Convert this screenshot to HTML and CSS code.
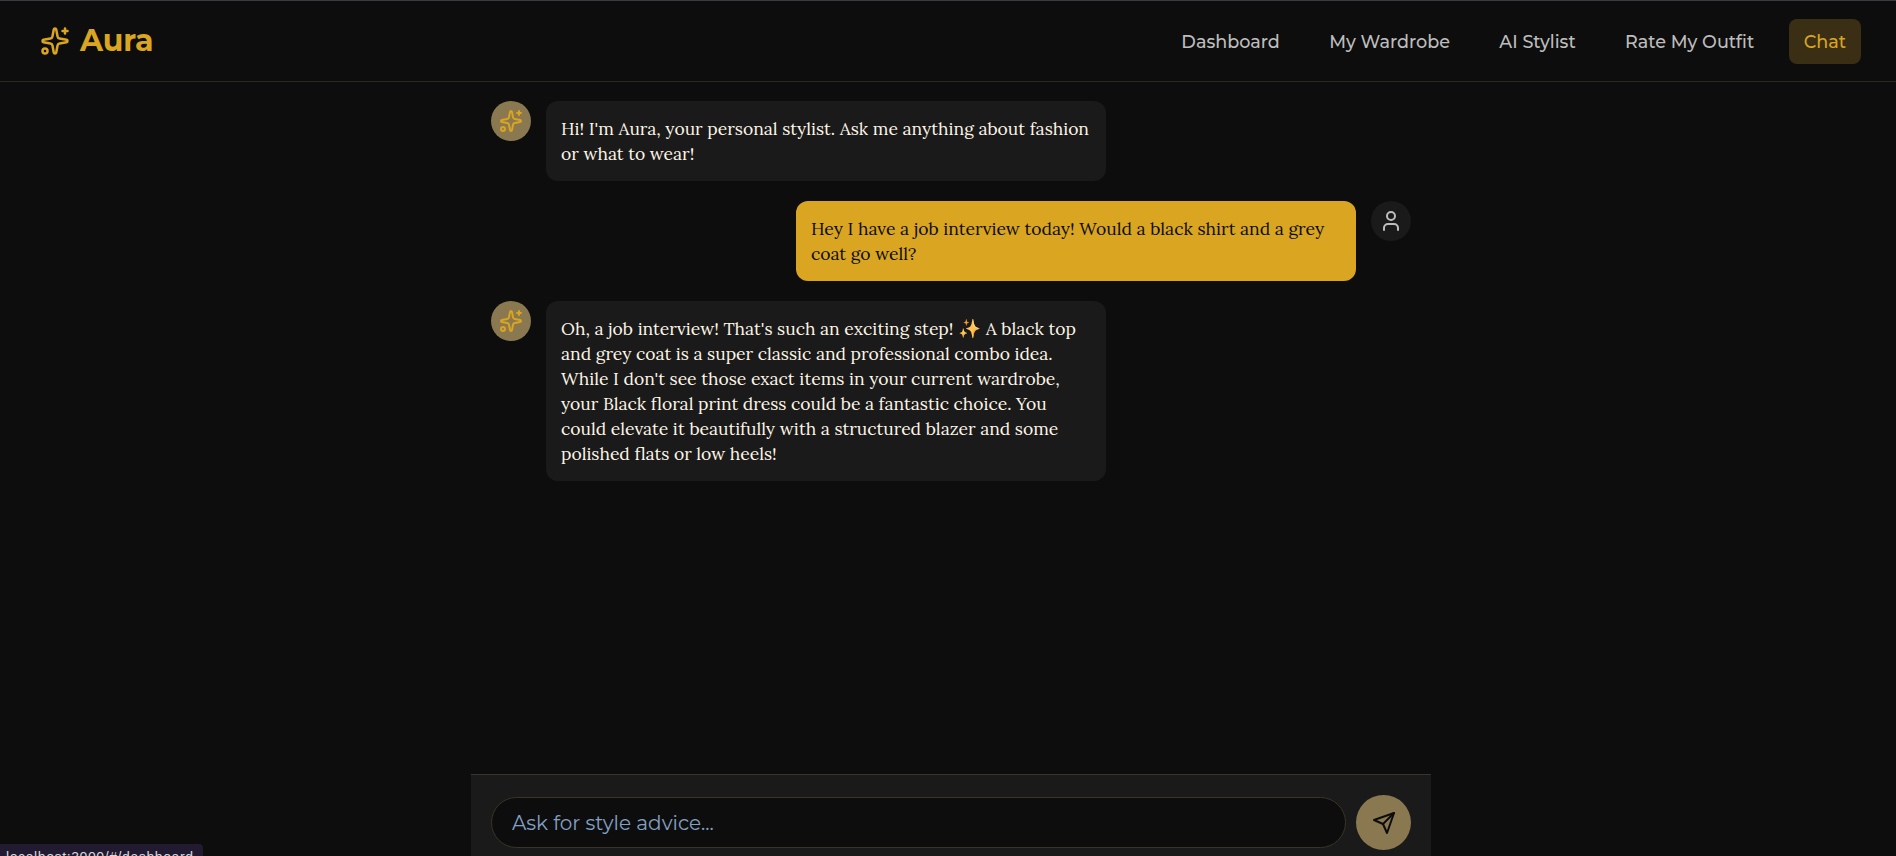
FILE: index.html
```html
<!DOCTYPE html>
<html lang="en">
<head>
<meta charset="utf-8">
<title>Aura</title>
<link rel="stylesheet" href="styles.css">
</head>
<body>
<div class="app">
  <header class="topbar">
    <div class="brand">
      <svg class="brand-icon" viewBox="0 0 24 24" fill="none" stroke="currentColor" stroke-width="2" stroke-linecap="round" stroke-linejoin="round"><path d="M11.017 2.814a1 1 0 0 1 1.966 0l1.051 5.558a2 2 0 0 0 1.594 1.594l5.558 1.051a1 1 0 0 1 0 1.966l-5.558 1.051a2 2 0 0 0-1.594 1.594l-1.051 5.558a1 1 0 0 1-1.966 0l-1.051-5.558a2 2 0 0 0-1.594-1.594l-5.558-1.051a1 1 0 0 1 0-1.966l5.558-1.051a2 2 0 0 0 1.594-1.594z"/><path d="M20 2v4"/><path d="M22 4h-4"/><circle cx="4" cy="20" r="2"/></svg>
      <span class="brand-name">Aura</span>
    </div>
    <nav class="nav">
      <a class="nav-link">Dashboard</a>
      <a class="nav-link">My Wardrobe</a>
      <a class="nav-link">AI Stylist</a>
      <a class="nav-link">Rate My Outfit</a>
      <a class="nav-link active">Chat</a>
    </nav>
  </header>
  <main class="chat">
    <section class="messages">
      <div class="msg">
        <div class="avatar bot"><svg viewBox="0 0 24 24" fill="none" stroke="currentColor" stroke-width="2" stroke-linecap="round" stroke-linejoin="round"><path d="M11.017 2.814a1 1 0 0 1 1.966 0l1.051 5.558a2 2 0 0 0 1.594 1.594l5.558 1.051a1 1 0 0 1 0 1.966l-5.558 1.051a2 2 0 0 0-1.594 1.594l-1.051 5.558a1 1 0 0 1-1.966 0l-1.051-5.558a2 2 0 0 0-1.594-1.594l-5.558-1.051a1 1 0 0 1 0-1.966l5.558-1.051a2 2 0 0 0 1.594-1.594z"/><path d="M20 2v4"/><path d="M22 4h-4"/><circle cx="4" cy="20" r="2"/></svg></div>
        <div class="bubble">Hi! I'm Aura, your personal stylist. Ask me anything about fashion<br>or what to wear!</div>
      </div>
      <div class="msg mine">
        <div class="bubble gold">Hey I have a job interview today! Would a black shirt and a grey<br>coat go well?</div>
        <div class="avatar user"><svg viewBox="0 0 24 24" fill="none" stroke="currentColor" stroke-width="2" stroke-linecap="round" stroke-linejoin="round"><path d="M19 21v-2a4 4 0 0 0-4-4H9a4 4 0 0 0-4 4v2"/><circle cx="12" cy="7" r="4"/></svg></div>
      </div>
      <div class="msg">
        <div class="avatar bot"><svg viewBox="0 0 24 24" fill="none" stroke="currentColor" stroke-width="2" stroke-linecap="round" stroke-linejoin="round"><path d="M11.017 2.814a1 1 0 0 1 1.966 0l1.051 5.558a2 2 0 0 0 1.594 1.594l5.558 1.051a1 1 0 0 1 0 1.966l-5.558 1.051a2 2 0 0 0-1.594 1.594l-1.051 5.558a1 1 0 0 1-1.966 0l-1.051-5.558a2 2 0 0 0-1.594-1.594l-5.558-1.051a1 1 0 0 1 0-1.966l5.558-1.051a2 2 0 0 0 1.594-1.594z"/><path d="M20 2v4"/><path d="M22 4h-4"/><circle cx="4" cy="20" r="2"/></svg></div>
        <div class="bubble">Oh, a job interview! That's such an exciting step! <span class="emoji">✨</span> A black top<br>and grey coat is a super classic and professional combo idea.<br>While I don't see those exact items in your current wardrobe,<br>your Black floral print dress could be a fantastic choice. You<br>could elevate it beautifully with a structured blazer and some<br>polished flats or low heels!</div>
      </div>
    </section>
    <form class="composer">
      <input class="field" type="text" placeholder="Ask for style advice...">
      <button class="send" type="button"><svg viewBox="0 0 24 24" fill="none" stroke="currentColor" stroke-width="2" stroke-linecap="round" stroke-linejoin="round"><path d="m22 2-7 20-4-9-9-4Z"/><path d="M22 2 11 13"/></svg></button>
    </form>
  </main>
  <div class="status">localhost:3000/#/dashboard</div>
</div>
</body>
</html>
```
FILE: styles.css
```css
* { box-sizing: border-box; }
html, body { margin: 0; height: 100%; overflow: hidden; }
body { background: #0d0d0d; color: #fdf5e6; font-family: "Montserrat", "Inter", "Liberation Sans", sans-serif; }
.app { height: 856px; overflow: hidden; display: flex; flex-direction: column; }
.topbar { flex: none; height: 82px; display: flex; align-items: center; justify-content: space-between; padding: 0 35px 0 40px; border-top: 1px solid #3a3a42; border-bottom: 1px solid #2c2a20; }
.brand { display: flex; align-items: center; gap: 10px; color: #daa520; }
.brand-icon { width: 30px; height: 30px; }
.brand-name { font-size: 30px; font-weight: 700; line-height: 36px; }
.nav { display: flex; gap: 19.4px; }
.nav-link { padding: 10px 15px; height: 45px; line-height: 25px; font-size: 17.6px; font-weight: 500; color: #bdbdbd; border-radius: 8px; }
.nav-link.active { color: #daa520; background: #3a2e14; }
.chat { flex: none; width: 960px; height: 788px; margin-left: 471px; display: flex; flex-direction: column; }
.messages { flex: 1; min-height: 0; padding: 19px 20px 0; display: flex; flex-direction: column; gap: 20px; }
.msg { display: flex; gap: 15px; align-items: flex-start; }
.msg.mine { justify-content: flex-end; }
.avatar { flex: none; width: 40px; height: 40px; border-radius: 50%; display: flex; align-items: center; justify-content: center; }
.avatar svg { width: 24px; height: 24px; }
.avatar.bot { background: #8a7850; color: #daa520; }
.avatar.user { background: #1a1a1a; color: #bdbdbd; }
.bubble { width: 560px; padding: 15px; border-radius: 12px; background: #1a1a1a; color: #fdf5e6; font-family: "Lora", "Liberation Serif", serif; font-size: 17.5px; line-height: 25px; white-space: nowrap; }
.bubble.gold { background: #daa520; color: #0d0d0d; }
.emoji { display: inline-block; font-size: 18.5px; line-height: 1; filter: hue-rotate(-25deg); }
.composer { flex: none; height: 96px; padding: 20px; display: flex; align-items: flex-start; gap: 10px; background: #1a1a1a; border-top: 1px solid #3a3428; }
.field { flex: 1; min-width: 0; height: 51px; margin-top: 2px; padding: 0 20px; border-radius: 26px; border: 1px solid #3a3428; background: #0d0d0d; font-family: inherit; font-size: 20px; color: #fdf5e6; outline: none; }
.field::placeholder { color: #84a0c4; opacity: 1; }
.send { flex: none; width: 55px; height: 55px; padding: 0; border: 0; border-radius: 50%; background: #8a7850; color: #0d0d0d; display: flex; align-items: center; justify-content: center; }
.send svg { width: 24px; height: 24px; }
.status { position: fixed; left: 0; bottom: -6px; height: 18px; width: 203px; padding: 0 6px; background: #211a30; color: #d8d8d8; font-family: "Liberation Sans", sans-serif; font-size: 14px; letter-spacing: 0.6px; line-height: 26px; border-top-right-radius: 4px; overflow: hidden; }
```
